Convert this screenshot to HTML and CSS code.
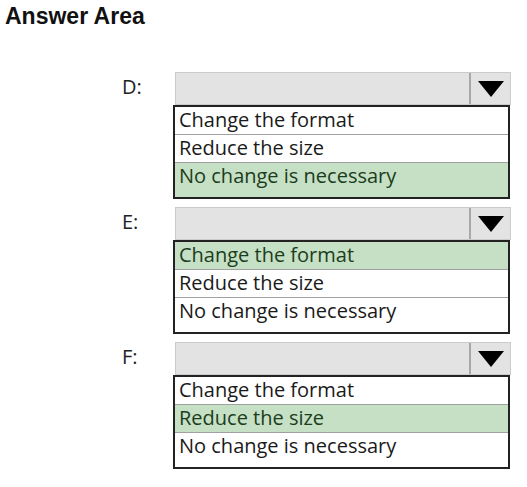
FILE: index.html
```html
<!DOCTYPE html>
<html>
<head>
<meta charset="utf-8">
<link rel="stylesheet" href="styles.css">
</head>
<body>
<h1 class="title">Answer Area</h1>
<div class="area">
  <div class="question">
    <div class="label">D:</div>
    <div class="combo"><div class="combo-field"></div><div class="combo-btn"><svg width="26" height="16" viewBox="0 0 26 16"><polygon points="0,0 26,0 13,16" fill="#000"/></svg></div></div>
    <div class="list">
      <div class="opt">Change the format</div>
      <div class="opt">Reduce the size</div>
      <div class="opt last selected">No change is necessary</div>
    </div>
  </div>
  <div class="question">
    <div class="label">E:</div>
    <div class="combo"><div class="combo-field"></div><div class="combo-btn"><svg width="26" height="16" viewBox="0 0 26 16"><polygon points="0,0 26,0 13,16" fill="#000"/></svg></div></div>
    <div class="list">
      <div class="opt selected">Change the format</div>
      <div class="opt">Reduce the size</div>
      <div class="opt last">No change is necessary</div>
    </div>
  </div>
  <div class="question">
    <div class="label">F:</div>
    <div class="combo"><div class="combo-field"></div><div class="combo-btn"><svg width="26" height="16" viewBox="0 0 26 16"><polygon points="0,0 26,0 13,16" fill="#000"/></svg></div></div>
    <div class="list">
      <div class="opt">Change the format</div>
      <div class="opt selected">Reduce the size</div>
      <div class="opt last">No change is necessary</div>
    </div>
  </div>
</div>
</body>
</html>
```

FILE: styles.css
```css
html, body {
  margin: 0;
  padding: 0;
  background: #ffffff;
}
.title {
  margin: 0;
  padding: 3px 0 0 5px;
  font-family: "Liberation Sans", Arial, sans-serif;
  font-weight: bold;
  font-size: 23px;
  line-height: 26px;
  color: #111;
}
.area {
  margin-top: 43px;
  padding-left: 122px;
  display: flex;
  flex-direction: column;
  gap: 8px;
}
.question {
  display: grid;
  grid-template-columns: 51px 337px;
  grid-template-rows: 33px 94px;
  font-family: "Open Sans", "Noto Sans", sans-serif;
  font-size: 20px;
  line-height: 26px;
  color: #1a1a1a;
}
.label {
  grid-column: 1;
  grid-row: 1;
  padding-top: 2px;
  color: #222;
}
.combo {
  grid-column: 2;
  grid-row: 1;
  margin-left: 2px;
  width: 336px;
  box-sizing: border-box;
  border: 1px solid #cacaca;
  background: #e3e3e3;
  display: flex;
}
.combo-field {
  flex: 1;
  border-right: 2px solid #a8a8a8;
}
.combo-btn {
  width: 39px;
  display: flex;
  align-items: center;
  justify-content: center;
}
.combo-btn svg {
  display: block;
  margin-top: 1px;
}
.list {
  grid-column: 2;
  grid-row: 2;
  box-sizing: border-box;
  border: 2px solid #222;
  background: #fff;
  display: flex;
  flex-direction: column;
}
.opt {
  height: 27px;
  padding-left: 4px;
  border-bottom: 1px solid #a0a0a0;
  white-space: nowrap;
}
.opt.last {
  flex: 1;
  border-bottom: none;
}
.opt.selected {
  background: #c5e0c5;
  color: #1c3d1c;
}
```
